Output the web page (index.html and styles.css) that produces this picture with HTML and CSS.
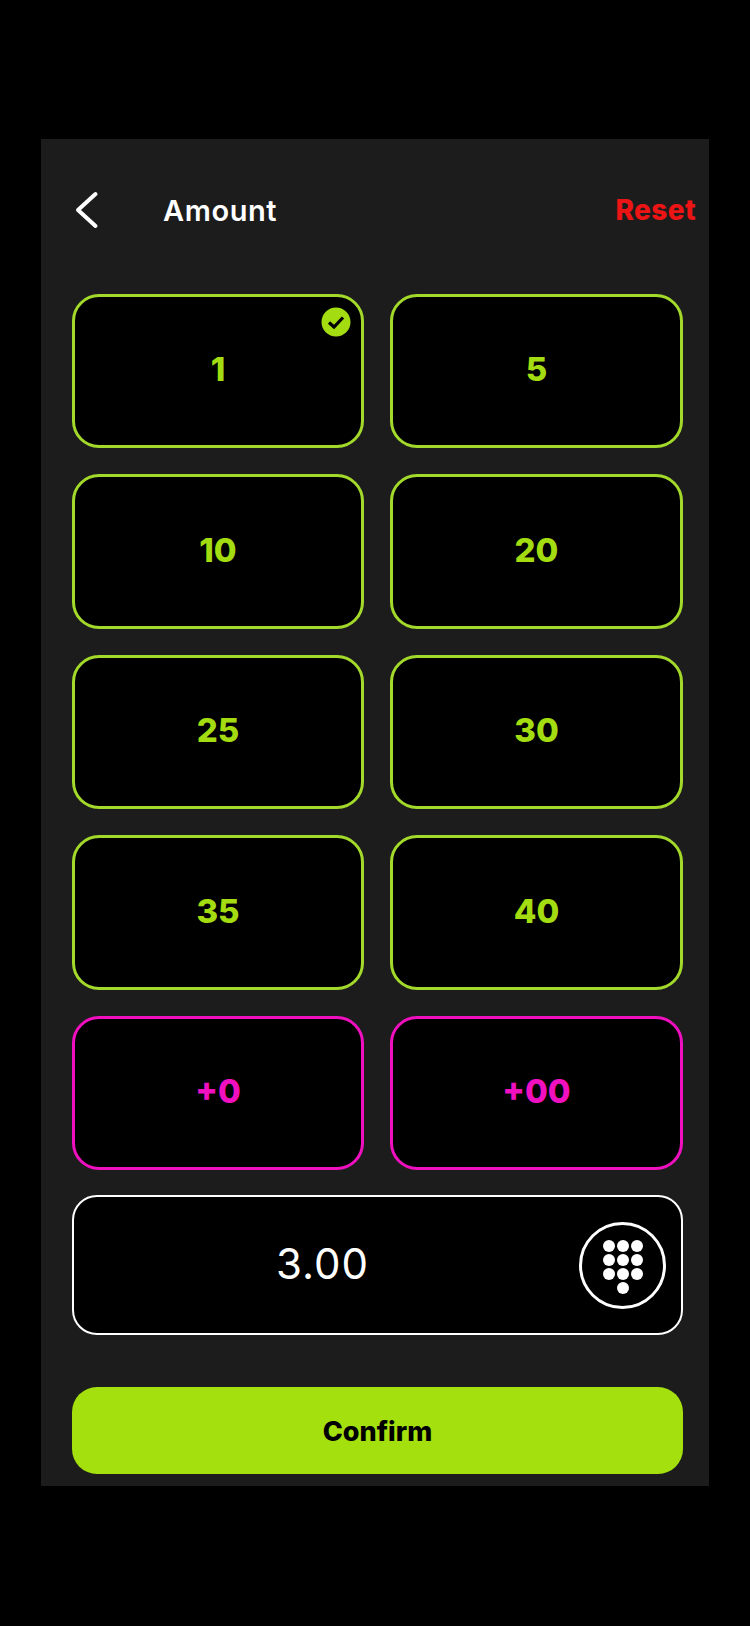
FILE: index.html
```html
<!DOCTYPE html>
<html lang="en">
<head>
<meta charset="utf-8">
<title>Amount</title>
<link rel="stylesheet" href="styles.css">
</head>
<body>
<main class="panel">
  <header class="header">
    <button class="back" aria-label="Back">
      <svg width="24" height="38" viewBox="0 0 24 38"><path d="M20.500 3 L3 19 L20.500 35" fill="none" stroke="#fff" stroke-width="4" stroke-linecap="round" stroke-linejoin="round"/></svg>
    </button>
    <h1 class="title">Amount</h1>
    <span class="reset">Reset</span>
  </header>
  <section class="grid">
    <div class="card">1
      <svg class="check" width="30" height="30" viewBox="0 0 30 30"><circle cx="15" cy="15" r="14.500" fill="#a3dc10"/><path d="M8 15.500 L13 20 L22 10.500" fill="none" stroke="#000" stroke-width="3.200"/></svg>
    </div>
    <div class="card">5</div>
    <div class="card">10</div>
    <div class="card">20</div>
    <div class="card">25</div>
    <div class="card">30</div>
    <div class="card">35</div>
    <div class="card">40</div>
    <div class="card pink">+0</div>
    <div class="card pink">+00</div>
  </section>
  <section class="input">
    <span class="value">3.00</span>
    <div class="keypad">
      <svg width="44" height="56" viewBox="0 0 44 56" fill="#fff">
        <circle cx="8" cy="7" r="6"/><circle cx="22" cy="7" r="6"/><circle cx="36" cy="7" r="6"/>
        <circle cx="8" cy="21" r="6"/><circle cx="22" cy="21" r="6"/><circle cx="36" cy="21" r="6"/>
        <circle cx="8" cy="35" r="6"/><circle cx="22" cy="35" r="6"/><circle cx="36" cy="35" r="6"/>
        <circle cx="22" cy="49" r="6"/>
      </svg>
    </div>
  </section>
  <button class="confirm">Confirm</button>
</main>
</body>
</html>
```
FILE: styles.css
```css
* { box-sizing: border-box; }
html, body { margin: 0; background: #000; }
body { height: 1626px; padding: 139px 41px 0; font-family: "Inter", "Liberation Sans", sans-serif; }
.panel {
  width: 668px; height: 1347px; background: #1c1c1c;
  padding: 0 26px 0 31px;
  display: flex; flex-direction: column;
}
.header { height: 154.500px; display: flex; align-items: center; padding-bottom: 12px; margin-right: -13px; }
.back { background: none; border: 0; padding: 0; width: 88px; margin-left: 3px; display: flex; }
.title { margin: 0; flex: 1; font-size: 29px; font-weight: 600; color: #fff; letter-spacing: .6px; }
.reset { font-size: 28px; font-weight: 800; color: #ec1414; letter-spacing: .4px; }
.grid { display: grid; grid-template-columns: 292px 293px; column-gap: 26px; grid-auto-rows: 154.500px; row-gap: 26px; }
.card {
  position: relative; display: flex; align-items: center; justify-content: center;
  background: #000; border: 3.500px solid #a3d92a; border-radius: 27px;
  padding-bottom: 3px;
  color: #a3dc10; font-size: 33px; font-weight: 800;
}
.card.pink { border-color: #f010c0; color: #f010c0; }
.check { position: absolute; top: 10px; right: 10px; }
.input {
  margin-top: 25px; height: 140px; display: flex; align-items: center;
  background: #000; border: 2.500px solid #fff; border-radius: 25px;
  padding-right: 15px;
}
.value { flex: 1; text-align: center; color: #fff; font-size: 42px; font-weight: 400; letter-spacing: 1px; padding: 0 8px 4px 0; }
.keypad {
  width: 87px; height: 87px; border: 3.500px solid #fff; border-radius: 50%;
  display: flex; align-items: center; justify-content: center; padding-top: 3px;
}
.confirm {
  margin-top: 52px; height: 87px; width: 611px; padding-top: 2px;
  background: #a3e00e; border: 0; border-radius: 25px;
  color: #000; font-family: inherit; font-size: 27px; font-weight: 800;
}
```
